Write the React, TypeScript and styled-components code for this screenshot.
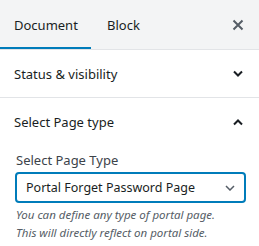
import styled, { createGlobalStyle } from "styled-components";

const GlobalStyle = createGlobalStyle`
  body {
    margin: 0;
    background: #fff;
    font-family: "Noto Sans", "Open Sans", sans-serif;
    color: #191e23;
  }
`;

const Sidebar = styled.aside`
  width: 259px;
  height: 246px;
  overflow: hidden;
  background: #fff;
`;

const Header = styled.div`
  display: flex;
  align-items: stretch;
  height: 49px;
  background: #f3f4f5;
  border-bottom: 1px solid #e2e4e7;
`;

const Tab = styled.button<{ $active?: boolean }>`
  border: 0;
  background: transparent;
  padding: 0 15px 0 ${(p) => (p.$active ? "14px" : "16px")};
  font: inherit;
  font-size: 13px;
  color: #191e23;
  width: ${(p) => (p.$active ? "91px" : "auto")};
  text-align: left;
  box-shadow: ${(p) => (p.$active ? "inset 0 -2px #007cba" : "none")};
  cursor: pointer;
`;

const CloseButton = styled.button`
  margin-left: auto;
  border: 0;
  background: transparent;
  display: flex;
  align-items: center;
  justify-content: center;
  padding: 1px 15px 0 0;
  color: #555d66;
`;

const Panel = styled.section<{ $open?: boolean }>`
  border-bottom: ${(p) => (p.$open ? "none" : "1px solid #e2e4e7")};
`;

const PanelHeader = styled.div`
  display: flex;
  align-items: center;
  justify-content: space-between;
  height: 47px;
  padding: 0 15px 0 14px;
  font-size: 13px;
`;

const PanelBody = styled.div`
  padding: 7px 13px 0 15px;
`;

const Label = styled.label`
  display: block;
  font-size: 13px;
  line-height: 16px;
  color: #3c434a;
  margin: 0 0 4px 1px;
`;

const SelectBox = styled.div`
  display: flex;
  align-items: center;
  justify-content: space-between;
  box-sizing: border-box;
  height: 31px;
  border: 2px solid #007cba;
  border-radius: 4px;
  padding: 0 9px 0 9px;
  font-size: 12.5px;
  color: #191e23;
`;

const Help = styled.p`
  margin: 3px 0 0 1px;
  font-size: 11.5px;
  font-style: italic;
  line-height: 18px;
  color: #555d66;
`;

const Chevron = ({ up }: { up?: boolean }) => (
  <svg width="12" height="8" viewBox="0 0 12 8" fill="none">
    <path
      d={up ? "M2 6.5 L6 2.5 L10 6.5" : "M2 1.5 L6 5.5 L10 1.5"}
      stroke="currentColor"
      strokeWidth="2"
    />
  </svg>
);

const App = () => {
  return (
    <Sidebar>
      <GlobalStyle />
      <Header>
        <Tab $active>Document</Tab>
        <Tab>Block</Tab>
        <CloseButton aria-label="Close">
          <svg width="12" height="12" viewBox="0 0 12 12">
            <path d="M1.5 1.5 L10.5 10.5 M10.5 1.5 L1.5 10.5" stroke="currentColor" strokeWidth="2" />
          </svg>
        </CloseButton>
      </Header>
      <Panel>
        <PanelHeader>
          <span>Status &amp; visibility</span>
          <Chevron />
        </PanelHeader>
      </Panel>
      <Panel $open>
        <PanelHeader>
          <span>Select Page type</span>
          <Chevron up />
        </PanelHeader>
        <PanelBody>
          <Label>Select Page Type</Label>
          <SelectBox>
            <span>Portal Forget Password Page</span>
            <svg width="10" height="6" viewBox="0 0 10 6" fill="none">
              <path d="M1 1 L5 5 L9 1" stroke="#555d66" strokeWidth="1.5" />
            </svg>
          </SelectBox>
          <Help>
            You can define any type of portal page.
            <br />
            This will directly reflect on portal side.
          </Help>
        </PanelBody>
      </Panel>
    </Sidebar>
  );
};

export default App;
